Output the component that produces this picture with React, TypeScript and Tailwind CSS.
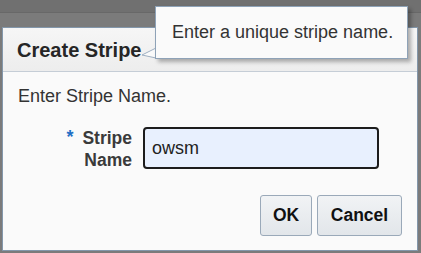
import React from 'react';

const App = () => {
  return (
    <div className="relative h-[253px] w-[421px] overflow-hidden bg-[#7b7b7b] font-['Liberation_Sans',Arial,sans-serif]">
      {/* page behind the overlay */}
      <div className="h-[13px] border-b border-[#686868] bg-[#707070]" />

      {/* dialog */}
      <div className="ml-[2px] mt-[14px] w-[416px] border border-[#8397ab] bg-[#fafafa]">
        <div className="flex h-[44px] items-center border-b border-[#c5cdd6] bg-gradient-to-b from-[#f6f6f6] to-[#ededed] pl-[14px]">
          <h1 className="text-[20px] font-bold text-[#262626]">Create Stripe</h1>
        </div>

        <div className="px-[15px] pt-[14px] pb-[14px]">
          <p className="text-[18px] leading-[21px] text-[#333]">Enter Stripe Name.</p>

          <div className="mt-[20px] flex items-start">
            <div className="flex w-[114px] justify-end gap-[9px]">
              <span className="text-[18px] font-bold leading-[20px] text-[#1f6fc5]">*</span>
              <label className="text-right text-[17.5px] font-bold leading-[22px] text-[#3a3a3a]">
                Stripe
                <br />
                Name
              </label>
            </div>
            <input
              defaultValue="owsm"
              className="ml-[11px] h-[42px] w-[236px] rounded-[4px] border-2 border-[#1c1c1c] bg-[#e8f0fe] pl-[7px] text-[18px] text-[#222] outline-none"
            />
          </div>

          <div className="mt-[24px] flex justify-end gap-[5px]">
            <button className="h-[41px] w-[52px] rounded-[3px] border border-[#9aa9b9] bg-gradient-to-b from-[#f1f3f5] to-[#e2e6ea] text-[17.5px] font-bold text-[#111]">
              OK
            </button>
            <button className="h-[41px] w-[85px] rounded-[3px] border border-[#9aa9b9] bg-gradient-to-b from-[#f1f3f5] to-[#e2e6ea] text-[17.5px] font-bold text-[#111]">
              Cancel
            </button>
          </div>
        </div>
      </div>

      {/* tooltip */}
      <svg className="absolute left-[134px] top-[44px]" width="24" height="18" viewBox="0 0 24 18">
        <polygon points="22,4 8,11 22,14" fill="#fafafa" stroke="#9fb0c2" strokeWidth="1" />
      </svg>
      <div className="absolute left-[155px] top-[6px] flex h-[53px] w-[253px] items-center border border-[#8ea2b7] bg-[#fafafa] pl-[16px] shadow-[3px_3px_4px_rgba(0,0,0,0.3)]">
        <span className="text-[18px] text-[#333]">Enter a unique stripe name.</span>
      </div>
    </div>
  );
};

export default App;
